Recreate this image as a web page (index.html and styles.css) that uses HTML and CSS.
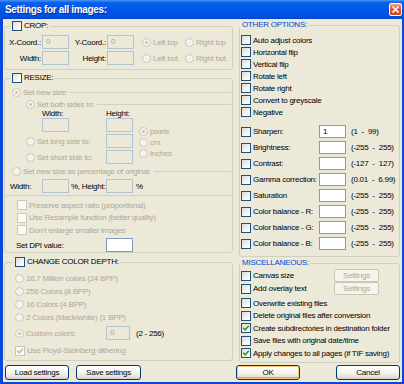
FILE: index.html
```html
<!DOCTYPE html>
<html lang="en">
<head>
  <meta charset="UTF-8">
  <title>Settings for all images</title>
  <link rel="stylesheet" href="styles.css">
</head>
<body>
  <div class="window">
    <div class="titlebar">
      <span class="title">Settings for all images:</span>
      <span class="close-btn">
        <svg width="9" height="9" viewBox="0 0 9 9"><path d="M1.5 1.5 L7.5 7.5 M7.5 1.5 L1.5 7.5" stroke="#fff" stroke-width="1.6" fill="none"/></svg>
      </span>
    </div>

    <div class="client">
      <div class="columns">
        <!-- left side -->
        <div class="col-left">
          <fieldset class="group">
            <legend class="lg-crop"><span class="cb"></span>CROP:</legend>
            <div class="crop-body">
              <div class="row">
                <span class="lbl-r w36">X-Coord.:</span>
                <span class="edit off">0</span>
                <span class="lbl-r w37">Y-Coord.:</span>
                <span class="edit off">0</span>
                <span class="opt dis ml8 w43"><span class="rb on"></span>Left top</span>
                <span class="opt dis"><span class="rb"></span>Right top</span>
              </div>
              <div class="row">
                <span class="lbl-r w36">Width:</span>
                <span class="edit off"></span>
                <span class="lbl-r w37">Height:</span>
                <span class="edit off"></span>
                <span class="opt dis ml8 w43"><span class="rb"></span>Left bot.</span>
                <span class="opt dis"><span class="rb"></span>Right bot.</span>
              </div>
            </div>
          </fieldset>

          <fieldset class="group resize">
            <legend class="lg-crop"><span class="cb"></span>RESIZE:</legend>
            <div class="sub-head pl7 mt4">
              <span class="opt dis"><span class="rb on"></span>Set new size:</span>
              <span class="line"></span>
            </div>
            <div class="sub-head pl21 mt2">
              <span class="opt dis"><span class="rb on"></span>Set both sides to:</span>
              <span class="line"></span>
            </div>
            <div class="sizes">
              <div class="sizes-left">
                <div class="wh-labels">
                  <span class="w64">Width:</span>
                  <span>Height:</span>
                </div>
                <div class="row pl37">
                  <span class="edit off"></span>
                  <span class="sp37"></span>
                  <span class="edit off"></span>
                </div>
                <div class="row mt2 pl21">
                  <span class="opt dis w80"><span class="rb"></span>Set long side to:</span>
                  <span class="edit off"></span>
                </div>
                <div class="row mt2 pl21">
                  <span class="opt dis w80"><span class="rb"></span>Set short side to:</span>
                  <span class="edit off"></span>
                </div>
              </div>
              <div class="units">
                <span class="opt dis"><span class="rb on"></span>pixels</span>
                <span class="opt dis"><span class="rb"></span>cm</span>
                <span class="opt dis"><span class="rb"></span>inches</span>
              </div>
            </div>
            <div class="sub-head pl7 mt2">
              <span class="opt dis"><span class="rb"></span>Set new size as percentage of original:</span>
              <span class="line"></span>
            </div>
            <div class="row pct-row">
              <span class="w32">Width:</span>
              <span class="edit off"></span>
              <span class="w35 ml2">%, Height:</span>
              <span class="edit off"></span>
              <span class="ml3">%</span>
            </div>
            <div class="hline"></div>
            <div class="resize-opts">
              <div class="crow dis"><span class="cb dis"></span>Preserve aspect ratio (proportional)</div>
              <div class="crow dis"><span class="cb dis"></span>Use Resample function (better quality)</div>
              <div class="crow dis"><span class="cb dis"></span>Don't enlarge smaller images</div>
            </div>
            <div class="row dpi-row">
              <span class="w90">Set DPI value:</span>
              <span class="edit"></span>
            </div>
          </fieldset>

          <fieldset class="group depth">
            <legend class="lg-depth"><span class="cb"></span>CHANGE COLOR DEPTH:</legend>
            <div class="depth-body">
              <div class="drow"><span class="opt dis"><span class="rb"></span>16,7 Million colors (24 BPP)</span></div>
              <div class="drow"><span class="opt dis"><span class="rb"></span>256 Colors (8 BPP)</span></div>
              <div class="drow"><span class="opt dis"><span class="rb"></span>16 Colors (4 BPP)</span></div>
              <div class="drow"><span class="opt dis"><span class="rb"></span>2 Colors (black/white) (1 BPP)</span></div>
              <div class="drow custom">
                <span class="opt dis w91"><span class="rb on"></span>Custom colors:</span>
                <span class="edit off w24">0</span>
                <span class="ml6">(2 - 256)</span>
              </div>
              <div class="drow floyd dis">
                <span class="cb dis on">
                  <svg width="8" height="8" viewBox="0 0 8 8"><path d="M1.2 3.8 L3.2 5.8 L6.8 1.8" fill="none" stroke="#B9B7AA" stroke-width="1.5"/></svg>
                </span>Use Floyd-Steinberg dithering
              </div>
            </div>
          </fieldset>
        </div>

        <!-- right side -->
        <div class="col-right">
          <fieldset class="group">
            <legend class="lg-blue">OTHER OPTIONS:</legend>
            <div class="other-body">
              <div class="crow r12"><span class="cb"></span>Auto adjust colors</div>
              <div class="crow r12"><span class="cb"></span>Horizontal flip</div>
              <div class="crow r12"><span class="cb"></span>Vertical flip</div>
              <div class="crow r12"><span class="cb"></span>Rotate left</div>
              <div class="crow r12"><span class="cb"></span>Rotate right</div>
              <div class="crow r12"><span class="cb"></span>Convert to greyscale</div>
              <div class="crow r12"><span class="cb"></span>Negative</div>

              <div class="adjust">
                <div class="arow"><span class="cb"></span><span class="alabel">Sharpen:</span><span class="edit">1</span><span class="range">(1 &nbsp;- &nbsp;99)</span></div>
                <div class="arow"><span class="cb"></span><span class="alabel">Brightness:</span><span class="edit"></span><span class="range">(-255 &nbsp;- &nbsp;255)</span></div>
                <div class="arow"><span class="cb"></span><span class="alabel">Contrast:</span><span class="edit"></span><span class="range">(-127 &nbsp;- &nbsp;127)</span></div>
                <div class="arow"><span class="cb"></span><span class="alabel">Gamma correction:</span><span class="edit"></span><span class="range">(0.01 &nbsp;- &nbsp;6.99)</span></div>
                <div class="arow"><span class="cb"></span><span class="alabel">Saturation</span><span class="edit"></span><span class="range">(-255 &nbsp;- &nbsp;255)</span></div>
                <div class="arow"><span class="cb"></span><span class="alabel">Color balance - R:</span><span class="edit"></span><span class="range">(-255 &nbsp;- &nbsp;255)</span></div>
                <div class="arow"><span class="cb"></span><span class="alabel">Color balance - G:</span><span class="edit"></span><span class="range">(-255 &nbsp;- &nbsp;255)</span></div>
                <div class="arow"><span class="cb"></span><span class="alabel">Color balance - B:</span><span class="edit"></span><span class="range">(-255 &nbsp;- &nbsp;255)</span></div>
              </div>
            </div>
          </fieldset>

          <fieldset class="group misc">
            <legend class="lg-blue">MISCELLANEOUS:</legend>
            <div class="misc-body">
              <div class="crow r13"><span class="cb"></span>Canvas size<span class="btn-small">Settings</span></div>
              <div class="crow r13"><span class="cb"></span>Add overlay text<span class="btn-small">Settings</span></div>
              <div class="misc-list">
                <div class="crow r125"><span class="cb"></span>Overwrite existing files</div>
                <div class="crow r125"><span class="cb"></span>Delete original files after conversion</div>
                <div class="crow r125"><span class="cb on">
                  <svg width="8" height="8" viewBox="0 0 8 8"><path d="M1.2 3.8 L3.2 5.8 L6.8 1.8" fill="none" stroke="#21A121" stroke-width="1.6"/></svg>
                </span>Create subdirectories in destination folder</div>
                <div class="crow r125"><span class="cb"></span>Save files with original date/time</div>
                <div class="crow r125"><span class="cb on">
                  <svg width="8" height="8" viewBox="0 0 8 8"><path d="M1.2 3.8 L3.2 5.8 L6.8 1.8" fill="none" stroke="#21A121" stroke-width="1.6"/></svg>
                </span>Apply changes to all pages (if TIF saving)</div>
              </div>
            </div>
          </fieldset>
        </div>
      </div>

      <div class="buttons">
        <span class="btn b-load">Load settings</span>
        <span class="btn b-save">Save settings</span>
        <span class="btn b-ok">OK</span>
        <span class="btn b-cancel">Cancel</span>
      </div>
    </div>
  </div>
</body>
</html>
```

FILE: styles.css
```css
body {
  margin: 0;
  font-family: "Liberation Sans", Arial, sans-serif;
  font-size: 8px;
  letter-spacing: -0.25px;
  color: #000;
  background: #ECE9D8;
}

.window {
  width: 404px;
  height: 384px;
  display: flex;
  flex-direction: column;
  overflow: hidden;
  background: #ECE9D8;
}

/* title bar */
.titlebar {
  height: 19px;
  flex: none;
  display: flex;
  align-items: center;
  justify-content: space-between;
  padding: 0 2px 0 5px;
  background: linear-gradient(to bottom, #4a95f5 0%, #0a5fec 14%, #0058e6 45%, #0053e0 85%, #0046cc 100%);
}

.title {
  color: #fff;
  font-weight: bold;
  font-size: 10px;
  letter-spacing: -0.35px;
  text-shadow: 1px 1px 0 #0b2a8c;
}

.close-btn {
  width: 13px;
  height: 13px;
  box-sizing: border-box;
  border: 1px solid #fff;
  border-radius: 2px;
  background: linear-gradient(to bottom, #f3a88a 0%, #e4633b 35%, #d2461c 100%);
  display: flex;
  align-items: center;
  justify-content: center;
}

/* client area */
.client {
  flex: 1;
  border-left: 3px solid #0847d8;
  border-right: 2px solid #0847d8;
  border-bottom: 2px solid #0847d8;
  padding: 2px 2px 0 1px;
  display: flex;
  flex-direction: column;
}

.columns {
  display: flex;
  gap: 6px;
}

.col-left {
  width: 229px;
  display: flex;
  flex-direction: column;
}

.col-right {
  width: 161px;
  margin-top: -1px;
  display: flex;
  flex-direction: column;
}

/* group boxes */
.group {
  margin: 0;
  padding: 0;
  min-width: 0;
  border: 1px solid #D0D0BF;
  border-radius: 3px;
}

legend {
  display: flex;
  align-items: center;
  gap: 2px;
  height: 10px;
  line-height: 10px;
  padding: 0 2px;
  white-space: nowrap;
}

.lg-crop { margin-left: 5px; }
.lg-depth { margin-left: 8px; }
.lg-blue { margin-left: 0; color: #0046D5; }

.resize { margin-top: 3px; }
.depth { margin-top: 4px; }
.misc { margin-top: 1px; }

/* controls */
.cb {
  width: 10px;
  height: 10px;
  flex: none;
  box-sizing: border-box;
  border: 1px solid #1C5180;
  background: linear-gradient(135deg, #DCDBD5 0%, #F4F4F0 60%, #FFFFFF 100%);
  display: flex;
  align-items: center;
  justify-content: center;
}

.cb.dis {
  border-color: #CAC8BB;
  background: #FAFAF7;
}

.rb {
  width: 9px;
  height: 9px;
  flex: none;
  box-sizing: border-box;
  border: 1px solid #CAC8BB;
  border-radius: 50%;
  background: #F4F3EE;
  display: flex;
  align-items: center;
  justify-content: center;
}

.rb.on::after {
  content: "";
  width: 3px;
  height: 3px;
  border-radius: 50%;
  background: #C4C2B5;
}

.edit {
  width: 27px;
  height: 14px;
  flex: none;
  box-sizing: border-box;
  border: 1px solid #7F9DB9;
  background: #fff;
  padding-left: 3px;
  line-height: 12px;
}

.edit.off {
  background: #ECE9D8;
  border-color: #B3C3D6;
  color: #ACA899;
}

.opt {
  display: flex;
  align-items: center;
  gap: 2px;
  white-space: nowrap;
}

.dis { color: #ACA899; }

.row {
  display: flex;
  align-items: center;
  height: 14px;
  white-space: nowrap;
}

.crow {
  display: flex;
  align-items: center;
  gap: 2px;
  white-space: nowrap;
}

.line {
  flex: 1;
  border-top: 1px solid #D0D0BF;
  margin: 0 0 0 3px;
}

.hline {
  border-top: 1px solid #D0D0BF;
  margin-top: 2px;
}

/* widths and spacing helpers */
.lbl-r { text-align: right; margin-right: 1px; }
.w24 { width: 24px; }
.w32 { width: 32px; }
.w35 { width: 35px; }
.w36 { width: 36px; }
.w37 { width: 37px; }
.w43 { width: 43px; }
.w64 { width: 64px; }
.w80 { width: 80px; }
.w90 { width: 90px; }
.w91 { width: 91px; }
.sp37 { width: 37px; flex: none; }
.ml2 { margin-left: 2px; }
.ml3 { margin-left: 3px; }
.ml6 { margin-left: 6px; }
.ml8 { margin-left: 8px; }
.mt2 { margin-top: 2px; }
.mt4 { margin-top: 4px; }
.pl7 { padding-left: 7px; }
.pl21 { padding-left: 21px; }
.pl37 { padding-left: 37px; }

/* crop */
.crop-body {
  padding: 4px 0 4px;
  display: flex;
  flex-direction: column;
  gap: 2px;
}

/* resize */
.sub-head {
  display: flex;
  align-items: center;
  height: 10px;
  padding-right: 1px;
}

.sizes {
  display: flex;
}

.sizes-left {
  width: 129px;
}

.wh-labels {
  display: flex;
  height: 9px;
  line-height: 9px;
  padding-left: 37px;
}

.units {
  margin-left: 5px;
  padding-top: 18px;
  display: flex;
  flex-direction: column;
  gap: 2px;
}

.units .opt { height: 9px; }

.pct-row {
  margin-top: 3px;
  padding-left: 5px;
}

.resize-opts {
  margin-top: 3px;
  padding-left: 12px;
}

.resize-opts .crow { height: 12.5px; }

.dpi-row {
  margin-top: 1.5px;
  padding-left: 11px;
}

/* color depth */
.depth-body {
  padding: 5px 0 3px 10px;
}

.drow {
  display: flex;
  align-items: center;
  gap: 2px;
  height: 13px;
}

.drow.custom {
  height: 14px;
  gap: 0;
  margin-top: 2px;
}

.drow.floyd { margin-top: 4px; }

/* right side */
.other-body {
  padding: 4px 0 6px 1px;
}

.r12 { height: 12px; }
.r13 { height: 13px; }
.r125 { height: 12.5px; }

.adjust {
  margin-top: 7px;
  display: flex;
  flex-direction: column;
  gap: 3px;
}

.arow {
  display: flex;
  align-items: center;
  height: 13px;
  white-space: nowrap;
}

.arow .cb { margin-right: 2px; }
.arow .edit { height: 13px; line-height: 11px; }

.alabel { width: 66px; }

.range { margin-left: 5px; }

.misc-body {
  padding: 1px 0 2px 1px;
}

.misc-list { margin-top: 2px; }

.btn-small {
  margin-left: auto;
  margin-right: 20px;
  width: 45px;
  height: 13px;
  box-sizing: border-box;
  border: 1px solid #C9C7BA;
  border-radius: 2px;
  background: #F5F4EA;
  color: #ACA899;
  display: flex;
  align-items: center;
  justify-content: center;
}

/* bottom buttons */
.buttons {
  display: flex;
  margin-top: 2.5px;
}

.btn {
  height: 15px;
  box-sizing: border-box;
  border: 1px solid #003C74;
  border-radius: 3px;
  background: linear-gradient(to bottom, #FFFFFF 0%, #F4F3EE 55%, #E3E0D5 85%, #D6D0C5 100%);
  display: flex;
  align-items: center;
  justify-content: center;
}

.b-load { width: 64px; margin-left: 1px; }
.b-save { width: 65px; margin-left: 7px; }
.b-ok {
  width: 64px;
  margin-left: 95px;
  box-shadow: inset 0 0 0 1px #F9C977, inset 0 -1px 0 1px #EDA52E;
}
.b-cancel { width: 64px; margin-left: 36px; }
```
